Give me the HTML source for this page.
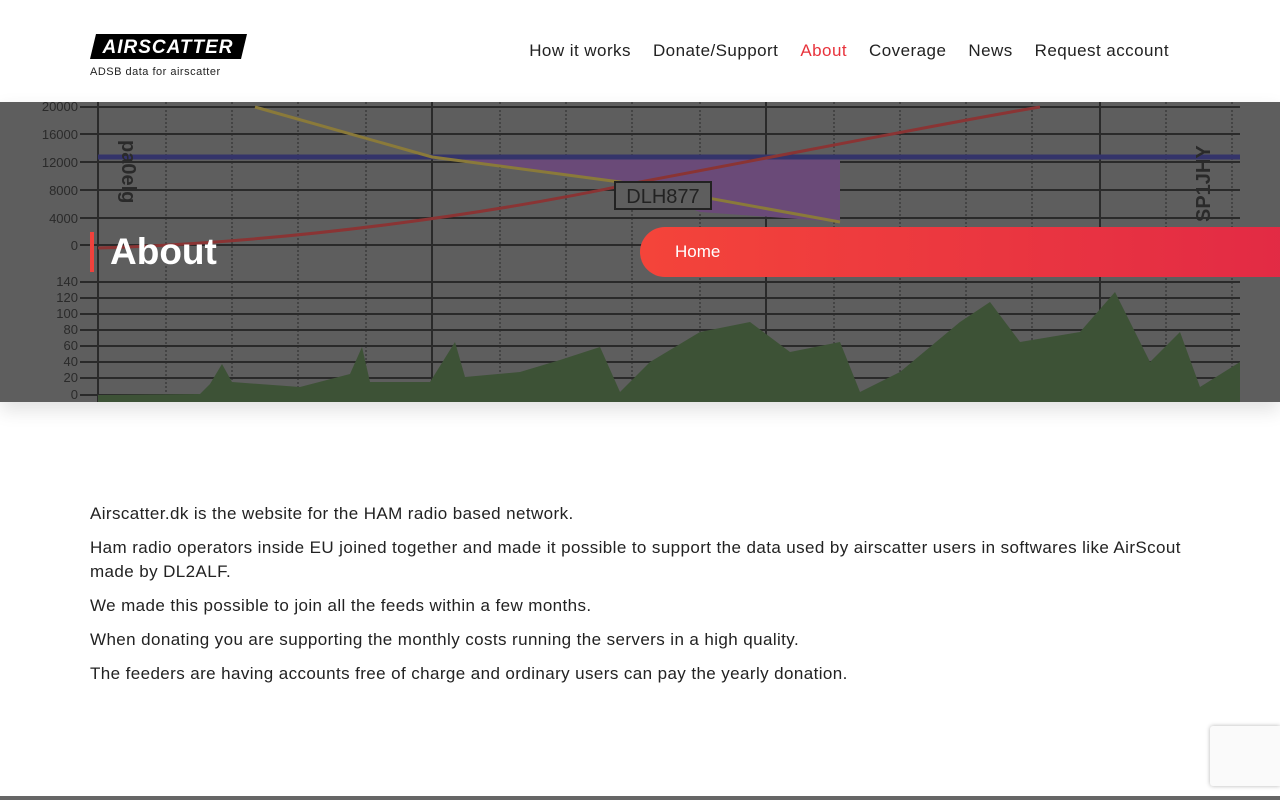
<!DOCTYPE html>
<html><head><meta charset="utf-8"><style>
*{margin:0;padding:0;box-sizing:border-box}
body{width:1280px;height:800px;overflow:hidden;background:#fff;font-family:"Liberation Sans",sans-serif;color:#222;position:relative}
header{height:102px;position:relative}
.logo{position:absolute;left:90px;top:34px}
.tag{position:absolute;left:90px;top:66px;font-size:11px;color:#222;letter-spacing:.5px}
nav{position:absolute;right:111px;top:41px;display:flex;gap:22px;font-size:17px;color:#222;letter-spacing:.45px}
nav a.on{color:#e8333c}
.hero{position:absolute;top:102px;left:0;width:1280px;height:300px;background:#5e5e5e;overflow:hidden;box-shadow:0 8px 18px rgba(0,0,0,.12)}
.hero h1{position:absolute;left:90px;top:130px;border-left:4px solid #f0413c;padding-left:16px;color:#fff;font-size:37px;line-height:40px;font-weight:bold}
.crumb{position:absolute;left:640px;top:125px;width:660px;height:50px;border-radius:25px 0 0 25px;background:linear-gradient(90deg,#f4443a,#e22a45);color:#fff;font-size:17px;line-height:50px;padding-left:35px}
.content{position:absolute;top:502px;left:90px;width:1100px;font-size:17px;line-height:24px;color:#222;letter-spacing:.4px}
.content p{margin-bottom:10px}
.foot{position:absolute;left:0;bottom:0;width:1280px;height:4px;background:#666}
.rc{position:absolute;right:0;top:726px;width:70px;height:60px;background:#fafafa;border-radius:3px 0 0 3px;box-shadow:0 0 4px rgba(0,0,0,.3)}
</style></head><body>
<header>
<svg class="logo" width="157" height="25" viewBox="0 0 157 25"><polygon points="6,0 157,0 151,25 0,25" fill="#000"/><text x="78" y="19" text-anchor="middle" font-family="Liberation Sans" font-weight="bold" font-style="italic" font-size="19" fill="#fff" letter-spacing="1">AIRSCATTER</text></svg>
<div class="tag">ADSB data for airscatter</div>
<nav><a>How it works</a><a>Donate/Support</a><a class="on">About</a><a>Coverage</a><a>News</a><a>Request account</a></nav>
</header>
<div class="hero">
<svg width="1280" height="300" style="position:absolute;left:0;top:0">
<g stroke="#2a2a2a" stroke-width="2">
<line x1="80" y1="5" x2="1240" y2="5"/><line x1="80" y1="32" x2="1240" y2="32"/><line x1="80" y1="60" x2="1240" y2="60"/><line x1="80" y1="88" x2="1240" y2="88"/><line x1="80" y1="116" x2="1240" y2="116"/><line x1="80" y1="143" x2="1240" y2="143"/>
<line x1="80" y1="180" x2="1240" y2="180"/><line x1="80" y1="196" x2="1240" y2="196"/><line x1="80" y1="212" x2="1240" y2="212"/><line x1="80" y1="228" x2="1240" y2="228"/><line x1="80" y1="244" x2="1240" y2="244"/><line x1="80" y1="260" x2="1240" y2="260"/><line x1="80" y1="276" x2="1240" y2="276"/><line x1="80" y1="293" x2="1240" y2="293"/>
<line x1="98" y1="0" x2="98" y2="300"/><line x1="432" y1="0" x2="432" y2="300"/><line x1="766" y1="0" x2="766" y2="300"/><line x1="1100" y1="0" x2="1100" y2="300"/>
</g>
<g stroke="#2a2a2a" stroke-width="1" stroke-dasharray="2,2">
<line x1="166" y1="0" x2="166" y2="300"/><line x1="232" y1="0" x2="232" y2="300"/><line x1="298" y1="0" x2="298" y2="300"/><line x1="366" y1="0" x2="366" y2="300"/><line x1="500" y1="0" x2="500" y2="300"/><line x1="566" y1="0" x2="566" y2="300"/><line x1="632" y1="0" x2="632" y2="300"/><line x1="700" y1="0" x2="700" y2="300"/><line x1="834" y1="0" x2="834" y2="300"/><line x1="900" y1="0" x2="900" y2="300"/><line x1="966" y1="0" x2="966" y2="300"/><line x1="1032" y1="0" x2="1032" y2="300"/><line x1="1166" y1="0" x2="1166" y2="300"/><line x1="1232" y1="0" x2="1232" y2="300"/>
</g>
<polygon points="432,55 620,80 700,110 840,120 840,55" fill="#6a4a78"/>
<line x1="98" y1="55" x2="1240" y2="55" stroke="#34346a" stroke-width="5"/>
<path d="M255,5 L432,55 L620,80 L840,120" stroke="#8a7a3a" stroke-width="3" fill="none"/>
<path d="M98,146 C300,140 500,110 640,80 C800,50 950,20 1040,5" stroke="#8a3434" stroke-width="3" fill="none"/>
<rect x="615" y="80" width="96" height="27" fill="#5e5e5e" stroke="#222" stroke-width="2"/>
<text x="663" y="101" text-anchor="middle" font-size="20" fill="#222">DLH877</text>
<path d="M98,293 L200,292 L210,282 L222,262 L232,280 L300,285 L350,272 L362,245 L370,280 L430,280 L455,240 L465,275 L520,270 L560,258 L600,245 L620,290 L650,260 L700,230 L750,220 L790,250 L840,240 L860,290 L900,270 L960,220 L990,200 L1020,240 L1080,230 L1115,190 L1150,260 L1180,230 L1200,285 L1240,260 L1240,300 L98,300Z" fill="#3d5236"/>
<g fill="#2a2a2a" font-size="13" text-anchor="end"><text x="78" y="9">20000</text><text x="78" y="37">16000</text><text x="78" y="65">12000</text><text x="78" y="93">8000</text><text x="78" y="121">4000</text><text x="78" y="148">0</text><text x="78" y="184">140</text><text x="78" y="200">120</text><text x="78" y="216">100</text><text x="78" y="232">80</text><text x="78" y="248">60</text><text x="78" y="264">40</text><text x="78" y="280">20</text><text x="78" y="297">0</text></g>
<text transform="translate(122,38) rotate(90)" font-size="20" font-weight="bold" fill="#2a2a2a">pa0elg</text>
<text transform="translate(1210,120) rotate(-90)" font-size="20" font-weight="bold" fill="#2a2a2a">SP1JHY</text>
</svg>
<h1>About</h1>
<div class="crumb">Home</div>
</div>
<div class="content">
<p>Airscatter.dk is the website for the HAM radio based network.</p>
<p>Ham radio operators inside EU joined together and made it possible to support the data used by airscatter users in softwares like AirScout made by DL2ALF.</p>
<p>We made this possible to join all the feeds within a few months.</p>
<p>When donating you are supporting the monthly costs running the servers in a high quality.</p>
<p>The feeders are having accounts free of charge and ordinary users can pay the yearly donation.</p>
</div>
<div class="rc"></div>
<div class="foot"></div>
</body></html>
